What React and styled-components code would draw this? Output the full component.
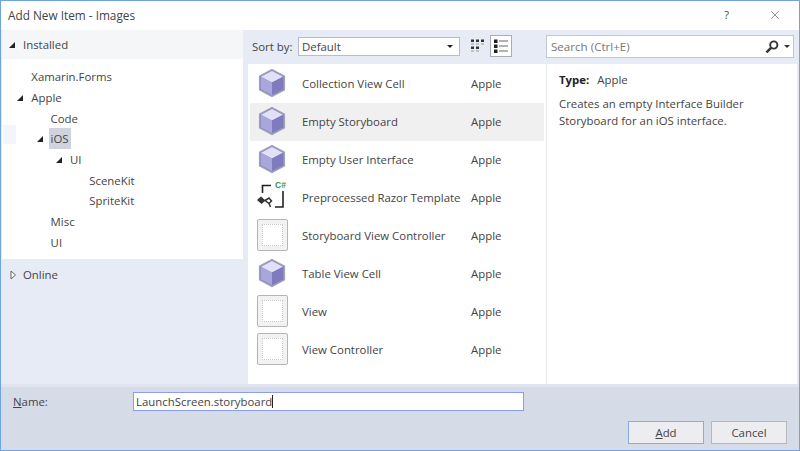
import React from "react";
import styled, { createGlobalStyle } from "styled-components";
import { X } from "lucide-react";

const GlobalStyle = createGlobalStyle`
  html, body {
    margin: 0;
    padding: 0;
    background: #fff;
  }
  * {
    box-sizing: border-box;
  }
`;

const treeItems = [
  { label: "Xamarin.Forms", level: 1 },
  { label: "Apple", level: 1, open: true },
  { label: "Code", level: 2 },
  { label: "iOS", level: 2, open: true, selected: true },
  { label: "UI", level: 3, open: true },
  { label: "SceneKit", level: 4 },
  { label: "SpriteKit", level: 4 },
  { label: "Misc", level: 2 },
  { label: "UI", level: 2 },
];

const templates = [
  { name: "Collection View Cell", icon: "cube" },
  { name: "Empty Storyboard", icon: "cube", selected: true },
  { name: "Empty User Interface", icon: "cube" },
  { name: "Preprocessed Razor Template", icon: "razor" },
  { name: "Storyboard View Controller", icon: "view" },
  { name: "Table View Cell", icon: "cube" },
  { name: "View", icon: "view" },
  { name: "View Controller", icon: "view" },
];

const CubeIcon = () => (
  <svg width="32" height="32" viewBox="0 0 32 32">
    <path d="M16 2.5 L28.5 9 V23 L16 29.5 L3.5 23 V9 Z" fill="#8f8cc6" stroke="#a2a3b4" strokeWidth="1.2" />
    <path d="M16 4 L27 9.8 L16 15.5 L5 9.8 Z" fill="#e2e0f8" />
    <path d="M5 9.8 L16 15.5 V28 L5 22.3 Z" fill="#a9a6db" />
    <path d="M27 9.8 L16 15.5 V28 L27 22.3 Z" fill="#7f7bbf" />
  </svg>
);

const ViewIcon = () => (
  <ViewFrame>
    <ViewInner />
  </ViewFrame>
);

const RazorIcon = () => (
  <svg width="34" height="34" viewBox="0 0 34 34">
    <path d="M7.5 13 V5.5 H16" fill="none" stroke="#222" strokeWidth="1.6" />
    <path d="M28 11 V27 H20" fill="none" stroke="#222" strokeWidth="1.6" />
    <path d="M2 20 L6 16.5 L10.5 20.5 L6.5 24 Z" fill="#333" />
    <path d="M10 20.5 L14 18 L16.5 21 L14 23.5 L10 20.5 M14 23.5 L15.5 27" fill="none" stroke="#333" strokeWidth="1.5" />
    <GreenLetters x="20" y="7.5">C#</GreenLetters>
  </svg>
);

const GridViewIcon = () => (
  <svg width="16" height="16" viewBox="0 0 16 16">
    <path d="M1 1.5h3v2.5H1zM6 1.5h3v2.5H6zM11 1.5h3v2.5h-3zM1 8.5h3v2.5H1zM6 8.5h3v2.5H6z" fill="#333" />
    <path d="M1 5.5h3v1H1zM6 5.5h3v1H6zM11 5.5h3v1h-3zM1 12.5h3v1H1zM6 12.5h3v1H6z" fill="#999" />
  </svg>
);

const ListViewIcon = () => (
  <svg width="16" height="16" viewBox="0 0 16 16">
    <path d="M1 1.5h3.5V5H1zM1 6.5h3.5V10H1zM1 11.5h3.5V15H1z" fill="#222" />
    <path d="M6 2.5h9v1H6zM6 7.5h9v1H6zM6 12.5h9v1H6z" fill="#666" />
  </svg>
);

const SearchIcon = () => (
  <svg width="14" height="14" viewBox="0 0 14 14">
    <circle cx="8.8" cy="5" r="3.6" fill="none" stroke="#333" strokeWidth="1.9" />
    <path d="M6 7.8 L1.5 12.3" stroke="#333" strokeWidth="2.4" />
  </svg>
);

const ClosedArrow = () => (
  <svg width="7" height="10" viewBox="0 0 7 10">
    <path d="M1 1 L5.5 5 L1 9 Z" fill="#fff" stroke="#666" strokeWidth="1" />
  </svg>
);

const App = () => {
  return (
    <>
      <GlobalStyle />
      <Window>
        <TitleBar>
          <Title>Add New Item - Images</Title>
          <TitleActions>
            <HelpButton>?</HelpButton>
            <X size={14} strokeWidth={1} color="#444" />
          </TitleActions>
        </TitleBar>

        <Body>
          <LeftPane>
            <InstalledHeader>
              <OpenArrow />
              <span>Installed</span>
            </InstalledHeader>
            <Tree>
              {treeItems.map((item, i) => (
                <TreeRow key={i} $level={item.level} $selected={item.selected}>
                  {item.open && <OpenArrow />}
                  <TreeLabel $selected={item.selected}>{item.label}</TreeLabel>
                </TreeRow>
              ))}
            </Tree>
            <OnlineRow>
              <ClosedArrow />
              <span>Online</span>
            </OnlineRow>
          </LeftPane>

          <MiddlePane>
            <Toolbar>
              <SortLabel>Sort by:</SortLabel>
              <SortSelect>
                <span>Default</span>
                <SelectCaret />
              </SortSelect>
              <ViewToggle>
                <GridViewIcon />
              </ViewToggle>
              <ViewToggle $active>
                <ListViewIcon />
              </ViewToggle>
            </Toolbar>
            <TemplateList>
              {templates.map((t) => (
                <TemplateRow key={t.name} $selected={t.selected}>
                  <IconSlot>
                    {t.icon === "cube" && <CubeIcon />}
                    {t.icon === "view" && <ViewIcon />}
                    {t.icon === "razor" && <RazorIcon />}
                  </IconSlot>
                  <TemplateName>{t.name}</TemplateName>
                  <span>Apple</span>
                </TemplateRow>
              ))}
            </TemplateList>
          </MiddlePane>

          <RightPane>
            <SearchBar>
              <SearchBox>
                <SearchHint>Search (Ctrl+E)</SearchHint>
                <SearchIcon />
                <SearchCaret />
              </SearchBox>
            </SearchBar>
            <Details>
              <TypeLine>
                <b>Type:</b>
                <span>Apple</span>
              </TypeLine>
              <Description>
                Creates an empty Interface Builder Storyboard for an iOS
                interface.
              </Description>
            </Details>
          </RightPane>
        </Body>

        <Footer>
          <NameRow>
            <NameLabel>
              <u>N</u>ame:
            </NameLabel>
            <NameInput>
              LaunchScreen.storyboard
              <Cursor />
            </NameInput>
          </NameRow>
          <ButtonRow>
            <DialogButton $primary>
              <u>A</u>dd
            </DialogButton>
            <DialogButton>Cancel</DialogButton>
          </ButtonRow>
        </Footer>
      </Window>
    </>
  );
};

// Styled Components
const Window = styled.div`
  width: 800px;
  height: 451px;
  display: flex;
  flex-direction: column;
  overflow: hidden;
  background: #e6ebf5;
  border: 1px solid #6fa3e3;
  font-family: "Open Sans", "Noto Sans", sans-serif;
  font-size: 11.4px;
  color: #444;
`;

const GreenLetters = styled.text`
  font-family: "Liberation Sans", sans-serif;
  font-size: 8.5px;
  font-weight: 700;
  fill: #2f9a3a;
`;

const TitleBar = styled.div`
  height: 29px;
  flex: none;
  display: flex;
  align-items: center;
  justify-content: space-between;
  padding: 0 17px 2px 7px;
  background: #fff;
`;

const Title = styled.div`
  font-size: 11.8px;
`;

const TitleActions = styled.div`
  display: flex;
  align-items: center;
  gap: 39px;
`;

const HelpButton = styled.span`
  font-size: 11px;
`;

const Body = styled.div`
  flex: 1;
  min-height: 0;
  display: flex;
`;

const LeftPane = styled.div`
  width: 241px;
  flex: none;
  display: flex;
  flex-direction: column;
  margin-left: 1px;
`;

const OpenArrow = styled.i`
  flex: none;
  width: 0;
  height: 0;
  margin: 0 8px 0 -14px;
  border-left: 6px solid transparent;
  border-bottom: 6px solid #222;
`;

const InstalledHeader = styled.div`
  height: 29px;
  display: flex;
  align-items: center;
  padding-left: 21px;
  background: #f5f6f8;
`;

const Tree = styled.div`
  height: 200px;
  background: #fff;
  padding-top: 7.5px;
`;

const TreeRow = styled.div`
  position: relative;
  height: 20.7px;
  display: flex;
  align-items: center;
  padding-left: ${(p) => 10 + p.$level * 19.3}px;

  &::before {
    content: "";
    display: ${(p) => (p.$selected ? "block" : "none")};
    position: absolute;
    left: 1px;
    top: -4px;
    width: 13px;
    height: 19px;
    background: #f2f6fc;
  }
`;

const TreeLabel = styled.span`
  padding: 3px 2px;
  margin-left: -2px;
  background: ${(p) => (p.$selected ? "#d0d3de" : "transparent")};
`;

const OnlineRow = styled.div`
  display: flex;
  align-items: center;
  gap: 6px;
  padding: 2px 0 0 8px;
  height: 29px;
`;

const MiddlePane = styled.div`
  width: 298px;
  flex: none;
  margin-left: 5px;
  display: flex;
  flex-direction: column;
`;

const Toolbar = styled.div`
  height: 34px;
  flex: none;
  display: flex;
  align-items: center;
  padding: 0 0 2px 4px;
`;

const SortLabel = styled.span`
  width: 46px;
  flex: none;
`;

const SortSelect = styled.div`
  width: 162px;
  height: 19px;
  flex: none;
  display: flex;
  align-items: center;
  justify-content: space-between;
  padding: 0 6px 0 3px;
  margin-right: 7px;
  background: #fff;
  border: 1px solid #b9bcc4;
`;

const SelectCaret = styled.i`
  border-left: 3px solid transparent;
  border-right: 3px solid transparent;
  border-top: 3px solid #222;
`;

const ViewToggle = styled.div`
  width: 22px;
  height: 22px;
  flex: none;
  display: flex;
  align-items: center;
  justify-content: center;
  margin-left: ${(p) => (p.$active ? "1px" : "0")};
  background: ${(p) => (p.$active ? "#fff" : "transparent")};
  border: 1px solid ${(p) => (p.$active ? "#a9adb8" : "transparent")};
`;

const TemplateList = styled.div`
  flex: 1;
  background: #fff;
  padding: 1px 2px 0;
`;

const TemplateRow = styled.div`
  height: 38px;
  display: flex;
  align-items: center;
  padding: 0 0 2px 5px;
  background: ${(p) => (p.$selected ? "#f0f0f1" : "transparent")};
`;

const IconSlot = styled.div`
  width: 34px;
  height: 34px;
  flex: none;
  display: flex;
  align-items: center;
  justify-content: center;
  margin-right: 13px;
`;

const ViewFrame = styled.div`
  width: 31px;
  height: 32px;
  padding: 4px;
  background: #f2f2f2;
  border: 1px solid #b5b5b5;
  border-radius: 2px;
`;

const ViewInner = styled.div`
  width: 100%;
  height: 100%;
  background: #fff;
  border: 1px dotted #c8c8c8;
`;

const TemplateName = styled.span`
  width: 169px;
  flex: none;
  white-space: nowrap;
`;

const RightPane = styled.div`
  flex: 1;
  display: flex;
  flex-direction: column;
  margin-right: 2px;
`;

const SearchBar = styled.div`
  height: 34px;
  flex: none;
  padding: 5px 3px 0 0;
`;

const SearchBox = styled.div`
  height: 23px;
  display: flex;
  align-items: center;
  padding: 0 3px 0 4px;
  background: #fff;
  border: 1px solid #c3c7d2;
`;

const SearchHint = styled.span`
  flex: 1;
  font-size: 11.6px;
  color: #777;
`;

const SearchCaret = styled.i`
  margin-left: 5px;
  border-left: 3px solid transparent;
  border-right: 3px solid transparent;
  border-top: 3px solid #333;
`;

const Details = styled.div`
  flex: 1;
  background: #fff;
  border-left: 1px solid #e6ebf5;
  padding: 8px 12px;
`;

const TypeLine = styled.div`
  display: flex;
  gap: 8px;
  margin-bottom: 9px;

  b {
    color: #222;
    font-weight: 700;
  }
`;

const Description = styled.div`
  line-height: 16.5px;
`;

const Footer = styled.div`
  height: 66px;
  flex: none;
  display: flex;
  flex-direction: column;
  background: #d6dbe8;
  border-top: 3px solid #e0e4ef;
`;

const NameRow = styled.div`
  display: flex;
  align-items: center;
  padding: 5px 0 0 12px;
`;

const NameLabel = styled.span`
  width: 120px;
  flex: none;
`;

const NameInput = styled.div`
  width: 391px;
  height: 19px;
  display: flex;
  align-items: center;
  padding-left: 2px;
  background: #fff;
  border: 1px solid #8c9cf0;
`;

const Cursor = styled.i`
  width: 1px;
  height: 13px;
  background: #222;
`;

const ButtonRow = styled.div`
  display: flex;
  justify-content: flex-end;
  gap: 7px;
  padding: 10px 12px 0 0;
`;

const DialogButton = styled.div`
  width: 76px;
  height: 23px;
  display: flex;
  align-items: center;
  justify-content: center;
  background: #ececf1;
  border: 1px solid ${(p) => (p.$primary ? "#85aee8" : "#b5b7bd")};
`;

export default App;
